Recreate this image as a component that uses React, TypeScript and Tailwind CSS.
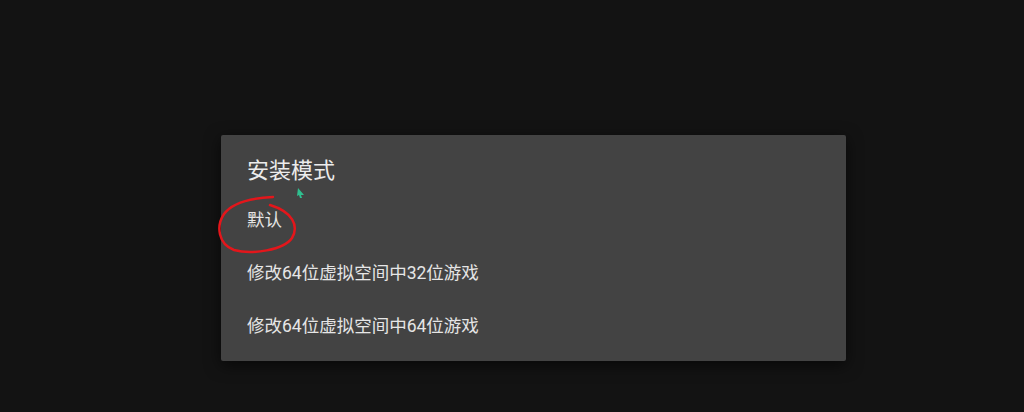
const items = ['默认', '修改64位虚拟空间中32位游戏', '修改64位虚拟空间中64位游戏'];

export default function App() {
  return (
    <div
      className="relative h-[412px] w-[1024px] overflow-hidden bg-[#131313]"
      style={{ fontFamily: 'Roboto, "Noto Sans CJK SC", sans-serif' }}
    >
      <div className="pl-[221px] pt-[135px]">
        <div className="w-[625px] rounded-[2px] bg-[#434343] px-[26px] pb-[8px] pt-[22px] shadow-[0_4px_16px_rgba(0,0,0,0.6)]">
          <div className="h-[29px] text-[22px] leading-[28px] text-[#ececec]">安装模式</div>
          <div className="mt-[8px] flex flex-col">
            {items.map((t) => (
              <div key={t} className="flex h-[53px] items-center text-[17.5px] text-[#e6e6e6]">
                {t}
              </div>
            ))}
          </div>
        </div>
      </div>

      {/* hand-drawn annotation + cursor */}
      <svg className="pointer-events-none absolute left-0 top-0" width="1024" height="412">
        <path
          d="M273,197 C250,198 232,203 224,214 C216,226 218,244 234,250 C252,255 284,250 292,238 C299,226 293,212 270,205"
          fill="none"
          stroke="#e3161b"
          strokeWidth="2.5"
          strokeLinecap="round"
        />
        <path d="M298,188 L304,195 L301,195 L302,198 L300,198 L299,195 L297,196 Z" fill="#2fbf8f" />
      </svg>
    </div>
  );
}
